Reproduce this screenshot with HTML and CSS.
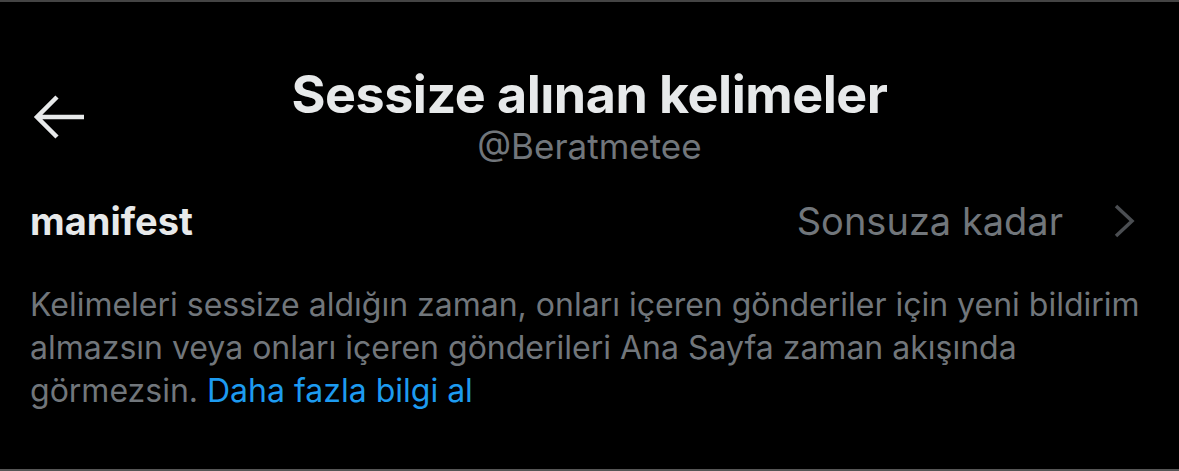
FILE: index.html
```html
<!DOCTYPE html>
<html lang="tr">
<head>
  <meta name="viewport" content="width=device-width, initial-scale=1">
  <link rel="stylesheet" href="styles.css">
</head>
<body>

  <div class="screen">
    <!-- Top bar: back button and centered title -->
    <header class="top-bar">
      <a class="back-btn">
        <svg width="54" height="46" viewBox="0 0 54 46">
          <path d="M51 22 H4 M24 2 L4 22 L24 42" fill="none" stroke="#e7e9ea" stroke-width="4.5"/>
        </svg>
      </a>
      <div class="title-block">
        <h1 class="title">Sessize alınan kelimeler</h1>
        <div class="handle">@Beratmetee</div>
      </div>
      <div></div>
    </header>

    <!-- Muted word row -->
    <div class="word-row">
      <span class="word">manifest</span>
      <span class="duration">
        Sonsuza kadar
        <svg class="chevron" width="24" height="34" viewBox="0 0 24 34">
          <path d="M3 2 L19 17 L3 32" fill="none" stroke="#4b4e52" stroke-width="3.5"/>
        </svg>
      </span>
    </div>

    <p class="info">
      Kelimeleri sessize aldığın zaman, onları içeren gönderiler için yeni bildirim<br>
      almazsın veya onları içeren gönderileri Ana Sayfa zaman akışında<br>
      görmezsin. <a class="link">Daha fazla bilgi al</a>
    </p>
  </div>

</body>
</html>
```

FILE: styles.css
```css
:root {
  --bg: #000000;
  --text-main: #e7e9ea;
  --text-muted: #71767b;
  --link: #1d9bf0;
}

* {
  box-sizing: border-box;
}

body {
  margin: 0;
  background-color: var(--bg);
  font-family: Inter, "Noto Sans", sans-serif;
}

.screen {
  height: 471px;
  border-top: 2px solid #444;
  border-bottom: 2px solid #555;
  overflow: hidden;
}

.top-bar {
  display: grid;
  grid-template-columns: 1fr auto 1fr;
  align-items: center;
  padding-top: 62px;
}

.back-btn {
  padding-left: 33px;
  margin-top: 6px;
  display: flex;
}

.title-block {
  text-align: center;
}

.title {
  margin: 0;
  font-size: 52px;
  line-height: 62px;
  font-weight: 700;
  letter-spacing: -0.5px;
  color: var(--text-main);
}

.handle {
  font-size: 35px;
  line-height: 40px;
  color: var(--text-muted);
}

.word-row {
  display: flex;
  justify-content: space-between;
  align-items: center;
  padding: 32px 42px 0 30px;
}

.word {
  font-size: 38px;
  font-weight: 700;
  color: var(--text-main);
}

.duration {
  display: flex;
  align-items: center;
  gap: 50px;
  font-size: 38px;
  color: var(--text-muted);
}

.info {
  margin: 39px 0 0;
  padding: 0 30px;
  font-size: 32px;
  line-height: 43px;
  color: var(--text-muted);
}

.link {
  color: var(--link);
}
```
